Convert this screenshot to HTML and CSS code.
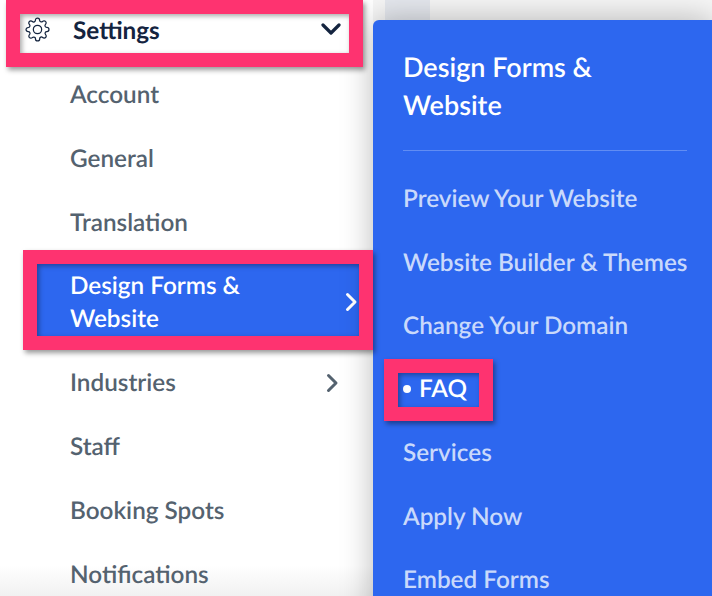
FILE: index.html
```html
<!DOCTYPE html>
<html lang="en">
<head>
  <meta charset="UTF-8" />
  <meta name="viewport" content="width=device-width, initial-scale=1" />
  <title>Settings</title>
  <link rel="stylesheet" href="styles.css">
</head>
<body>
  <div class="page">
    <aside class="sidebar">
      <div class="settings-head marked">
        <svg class="gear" viewBox="0 0 24 24" fill="none" stroke="#14243f" stroke-width="1.2" stroke-linecap="round" stroke-linejoin="round">
          <circle cx="12" cy="12" r="4"/>
          <path d="M19.4 15a1.65 1.65 0 0 0 .33 1.82l.06.06a2 2 0 0 1 0 2.83 2 2 0 0 1-2.83 0l-.06-.06a1.65 1.65 0 0 0-1.82-.33 1.65 1.65 0 0 0-1 1.51V21a2 2 0 0 1-2 2 2 2 0 0 1-2-2v-.09A1.65 1.65 0 0 0 9 19.4a1.65 1.65 0 0 0-1.82.33l-.06.06a2 2 0 0 1-2.83 0 2 2 0 0 1 0-2.83l.06-.06a1.65 1.65 0 0 0 .33-1.82 1.65 1.65 0 0 0-1.51-1H3a2 2 0 0 1-2-2 2 2 0 0 1 2-2h.09A1.65 1.65 0 0 0 4.6 9a1.65 1.65 0 0 0-.33-1.82l-.06-.06a2 2 0 0 1 0-2.83 2 2 0 0 1 2.83 0l.06.06a1.65 1.65 0 0 0 1.82.33H9a1.65 1.65 0 0 0 1-1.51V3a2 2 0 0 1 2-2 2 2 0 0 1 2 2v.09a1.65 1.65 0 0 0 1 1.51 1.65 1.65 0 0 0 1.82-.33l.06-.06a2 2 0 0 1 2.83 0 2 2 0 0 1 0 2.83l-.06.06a1.65 1.65 0 0 0-.33 1.82V9a1.65 1.65 0 0 0 1.51 1H21a2 2 0 0 1 2 2 2 2 0 0 1-2 2h-.09a1.65 1.65 0 0 0-1.51 1z"/>
        </svg>
        <span class="settings-title">Settings</span>
        <svg class="chevron-down" viewBox="0 0 20 12" fill="none" stroke="#14243f" stroke-width="3.2" stroke-linecap="round" stroke-linejoin="round">
          <path d="M2 2l8 8 8-8"/>
        </svg>
      </div>

      <nav class="side-nav">
        <a class="side-item">Account</a>
        <a class="side-item">General</a>
        <a class="side-item">Translation</a>
        <a class="side-item active marked">
          <span class="active-label">Design Forms &amp; Website</span>
          <svg class="chevron-right" viewBox="0 0 12 20" fill="none" stroke="#fff" stroke-width="3" stroke-linecap="round" stroke-linejoin="round">
            <path d="M2.500 2.500L10 10l-7.500 7.500"/>
          </svg>
        </a>
        <a class="side-item">
          <span>Industries</span>
          <svg class="chevron-right" viewBox="0 0 12 20" fill="none" stroke="#54626f" stroke-width="3" stroke-linecap="round" stroke-linejoin="round">
            <path d="M2.500 2.500L10 10l-7.500 7.500"/>
          </svg>
        </a>
        <a class="side-item">Staff</a>
        <a class="side-item">Booking Spots</a>
        <a class="side-item">Notifications</a>
      </nav>
    </aside>

    <div class="backdrop">
      <section class="flyout">
        <h2 class="flyout-title">Design Forms &amp;<br>Website</h2>
        <ul class="flyout-list">
          <li>Preview Your Website</li>
          <li>Website Builder &amp; Themes</li>
          <li>Change Your Domain</li>
          <li class="current"><span class="current-box marked"><i class="dot"></i>FAQ</span></li>
          <li>Services</li>
          <li>Apply Now</li>
          <li>Embed Forms</li>
        </ul>
      </section>
    </div>
  </div>
</body>
</html>
```

FILE: styles.css
```css
html, body {
  margin: 0;
  height: 100%;
  overflow: hidden;
}
body {
  font-family: 'Lato', sans-serif;
  text-rendering: geometricPrecision;
  background: white;
}
.page {
  display: flex;
  height: 596px;
  overflow: hidden;
}

/* left menu */
.sidebar {
  width: 373px;
  flex-shrink: 0;
  padding-top: 14px;
  box-sizing: border-box;
  background: linear-gradient(to bottom, white 565px, #f1f1f1 596px);
}
.settings-head {
  display: flex;
  align-items: center;
  height: 39px;
  margin: 0 24px 0 20px;
  background: white;
  color: #14243f;
}
.gear {
  width: 25px;
  height: 25px;
  margin: -9px 0 0 5px;
}
.settings-title {
  margin: -7px 0 0 23px;
  flex: 1;
  font-size: 24.300px;
  font-weight: 700;
}
.chevron-down {
  width: 20px;
  height: 12px;
  margin: -9px 8px 0 0;
}
.side-nav {
  margin-top: 10px;
}
.side-item {
  display: flex;
  align-items: center;
  justify-content: space-between;
  padding: 15px 34px 15px 70px;
  font-size: 24.300px;
  font-weight: 600;
  line-height: 33.750px;
  color: #54626f;
}
.side-item .chevron-right {
  width: 14px;
  height: 20px;
}
.active {
  margin: 10px 14px 15px 37px;
  padding: 3px 1px 0 33px;
  height: 69px;
  background: #2d67ef;
  color: white;
}
.active-label {
  width: 200px;
  line-height: 33px;
}

/* pink annotation frame drawn around a marked element */
.marked {
  position: relative;
}
.marked::after {
  content: "";
  position: absolute;
  inset: -14px;
  z-index: 2;
  border: 14px solid #fe3370;
  box-shadow: 2px 3px 5px rgba(0,0,0,0.4), inset 2px 2px 5px rgba(0,0,0,0.35);
  pointer-events: none;
}

/* right side */
.backdrop {
  flex: 1;
  padding-top: 20px;
  background: linear-gradient(to right, #f6f6f6 12px, #e5e8ee 12px, #e5e8ee 57px, #f6f6f6 57px);
}
.flyout {
  position: relative;
  z-index: 1;
  height: 600px;
  padding: 28px 25px 0 30px;
  background: #2d67ef;
  border-radius: 6px 0 0 0;
  box-shadow: 0 0 32px rgba(0,0,0,0.28);
  color: white;
}
.flyout-title {
  margin: 0;
  padding-bottom: 26px;
  border-bottom: 1px solid rgba(255,255,255,0.25);
  font-size: 27px;
  font-weight: 600;
  line-height: 38px;
}
.flyout-list {
  list-style: none;
  margin: 16px 0 0;
  padding: 0;
}
.flyout-list li {
  height: 63.500px;
  display: flex;
  align-items: center;
  font-size: 24.300px;
  font-weight: 600;
  color: #c9d9fb;
  white-space: nowrap;
}
.flyout-list .current {
  color: white;
}
.current-box {
  box-sizing: border-box;
  display: inline-flex;
  align-items: center;
  height: 34px;
  margin: 2px 0 0 -5px;
  padding: 0 12px 3px 5px;
}
.dot {
  width: 8px;
  height: 8px;
  margin-right: 8px;
  border-radius: 50%;
  background: white;
}
```
